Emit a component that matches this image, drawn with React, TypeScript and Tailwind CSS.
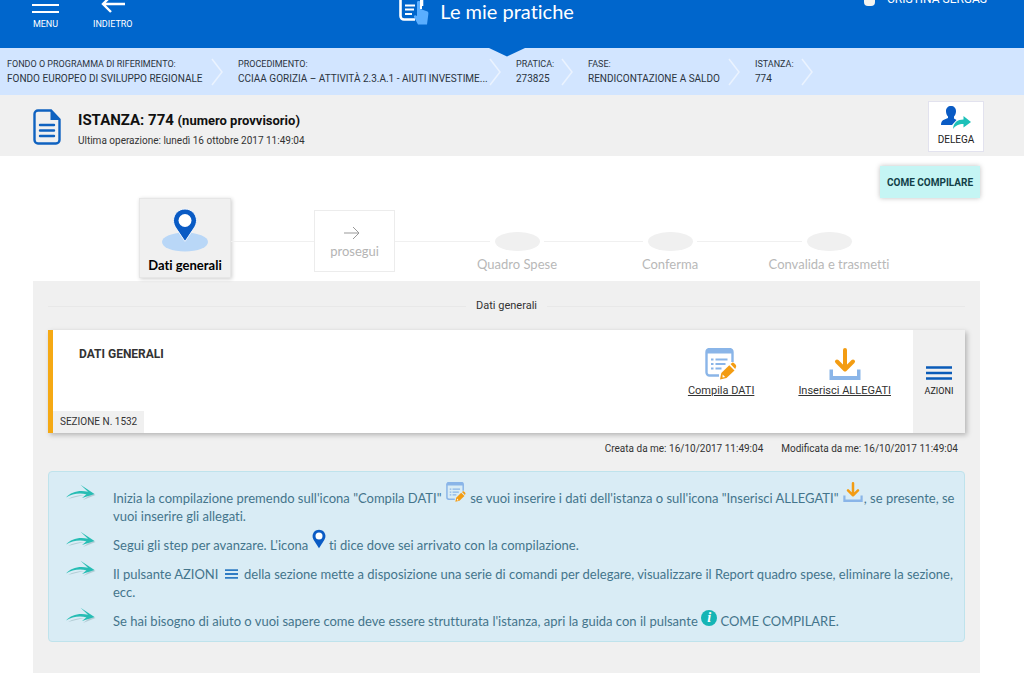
// components/Istanza/IstanzaPage.tsx
import React from 'react';

interface Crumb {
  label: string;
  value: string;
}

interface IconProps {
  className?: string;
}

const crumbs: Crumb[] = [
  { label: 'FONDO O PROGRAMMA DI RIFERIMENTO:', value: 'FONDO EUROPEO DI SVILUPPO REGIONALE' },
  { label: 'PROCEDIMENTO:', value: 'CCIAA GORIZIA – ATTIVITÀ 2.3.A.1 - AIUTI INVESTIME...' },
  { label: 'PRATICA:', value: '273825' },
  { label: 'FASE:', value: 'RENDICONTAZIONE A SALDO' },
  { label: 'ISTANZA:', value: '774' },
];

const BarsIcon: React.FC<IconProps> = ({ className }) => (
  <svg viewBox="0 0 26 14" className={className} preserveAspectRatio="none" fill="none" stroke="currentColor" strokeWidth="2.6">
    <path d="M0 1.500h26M0 7h26M0 12.500h26" />
  </svg>
);

const PinIcon: React.FC<IconProps> = ({ className }) => (
  <svg viewBox="0 0 24 34" className={className}>
    <path
      d="M12 1C5.800 1 1 5.800 1 12c0 3 1.100 5.200 2.500 7.600L12 33l8.500-13.400C21.900 17.200 23 15 23 12 23 5.800 18.200 1 12 1z"
      fill="#0a5bc4"
    />
    <circle cx="12" cy="12" r="6" fill="#fff" />
  </svg>
);

const CompilaIcon: React.FC<IconProps> = ({ className }) => (
  <svg viewBox="0 0 32 32" className={className} fill="none">
    <path d="M14 27.500H4.500a3 3 0 0 1-3-3V4a3 3 0 0 1 3-3h20a3 3 0 0 1 3 3v10" stroke="#8ab5e8" strokeWidth="2.400" />
    <path d="M1 5.500V4a3.500 3.500 0 0 1 3.500-3.500h20A3.500 3.500 0 0 1 28 4v1.500z" fill="#8ab5e8" />
    <path d="M6 11.500h2.500M6 16h2.500M6 20.500h2.500M10.500 11.500h12M10.500 16h10M10.500 20.500h6" stroke="#8ab5e8" strokeWidth="2" />
    <path d="M15 31.500l1.300-6.500 8-7.800 5.200 5.200-8 7.700z" fill="#f39c12" />
    <path d="M25.500 16l1.800-1.300c1-.7 4.500 2.600 3.900 3.900l-1 2.300z" fill="#f39c12" />
    <path d="M17.600 26.400l2.600 2.600-2.700.6z" fill="#fff" />
  </svg>
);

const AllegatiIcon: React.FC<IconProps> = ({ className }) => (
  <svg viewBox="0 0 32 32" className={className} fill="none">
    <path d="M0.500 21.500h3.500V28h24v-6.500h3.500V32H.5z" fill="#8ab5e8" />
    <path d="M16 2v19M8 13.500l8 8 8-8" stroke="#f39c12" strokeWidth="4" strokeLinecap="round" strokeLinejoin="round" />
  </svg>
);

const CurvedArrow: React.FC = () => (
  <svg viewBox="0 0 30 18" className="-mt-[5px] h-[18px] w-[30px] shrink-0">
    <path d="M2 15C9 11 17 10.500 23 11.500L17 16l12.500-5L26 9z" fill="#b3ccd5" />
    <path d="M0 13.500C5 8 13 5.800 22 7.800L14.500.8 28.500 10l-12.500 4 4.500-3.800C13 8.500 6 9.800 0 13.500z" fill="#27bdb4" />
  </svg>
);

const Header: React.FC = () => (
  <header className="relative flex h-12 items-end bg-[#0066cc] text-white">
    <nav className="flex w-[39%] items-end gap-[34px] pb-[18px] pl-[32px]">
      <button type="button" className="flex flex-col items-center gap-[5px] text-[9px] leading-[11px]">
        <svg viewBox="0 0 27 18" className="h-[18px] w-[27px]" stroke="currentColor" strokeWidth="2.200">
          <path d="M0 2h27M0 9h27M0 16h27" />
        </svg>
        MENU
      </button>
      <button type="button" className="flex flex-col items-center gap-[5px] text-[9px] leading-[11px]">
        <svg viewBox="0 0 24 18" className="h-[18px] w-[24px]" fill="none" stroke="currentColor" strokeWidth="2.400">
          <path d="M24 8H2M10 0L2 8l8 8" />
        </svg>
        INDIETRO
      </button>
    </nav>
    <div className="flex items-end gap-[11px] pb-[23px]">
      <svg viewBox="0 0 30 32" className="h-8 w-[30px]" fill="none">
        <path d="M16 26.500H5a3.500 3.500 0 0 1-3.500-3.500V4A3 3 0 0 1 4.500 1H20a3 3 0 0 1 3 3v9" stroke="#fff" strokeWidth="2.600" />
        <path d="M6 12.500h10M6 16.500h9M6 21h7" stroke="#fff" strokeWidth="2" />
        <path d="M18 9c0-1.500 3.500-1.500 3.500 0v7l7 2.500c1 .5 1 1.500.8 3L28 31.500h-9l-4-7.500c-.5-1.500 1-2.500 3-1z" fill="#5aaeff" />
        <path d="M22 6v10" stroke="#fff" strokeWidth="2" />
      </svg>
      <h1 className="font-[Lato,sans-serif] text-[20px] leading-[28px] [font-variant-ligatures:none]">Le mie pratiche</h1>
    </div>
    <div className="ml-auto flex items-end gap-3 pr-[37px] pb-[42px] text-[12px] leading-[14px]">
      <span className="h-3 w-[11px] rounded-sm bg-[#f4f4f0]" />
      CRISTINA SERGAS
    </div>
    <svg viewBox="0 0 36 9" className="absolute top-full left-[489px] z-10 h-[9px] w-9">
      <path d="M0 0h36L18 8.500z" fill="#0066cc" />
    </svg>
  </header>
);

const Breadcrumb: React.FC = () => (
  <ol className="grid h-[47px] grid-cols-[231px_278px_72px_167px_73px] bg-[#d2e5ff] pl-[7px] text-[#2b3440]">
    {crumbs.map(crumb => (
      <li key={crumb.label} className="flex items-center justify-between pr-[15px] whitespace-nowrap">
        <span className="flex w-0 flex-col">
          <span className="text-[9px] leading-[14px]">{crumb.label}</span>
          <span className="text-[10px] leading-[15px]">{crumb.value}</span>
        </span>
        <svg viewBox="0 0 12 28" className="h-7 w-3 shrink-0" fill="none" stroke="#ebf3ff" strokeWidth="1.500">
          <path d="M1 1l10 13L1 27" />
        </svg>
      </li>
    ))}
  </ol>
);

const IstanzaBar: React.FC = () => (
  <section className="flex h-[61px] items-center bg-[#f0f0f0] pt-[2px] pr-10 pl-[33px]">
    <svg viewBox="0 0 28 36" className="h-9 w-7" fill="none" stroke="#0f62c0" strokeWidth="2.400">
      <path d="M18 1.500H5A3.500 3.500 0 0 0 1.500 5v26A3.500 3.500 0 0 0 5 34.500h18a3.500 3.500 0 0 0 3.500-3.500V10.500z" />
      <path d="M17.500 1v10H27z" fill="#0f62c0" stroke="none" />
      <path d="M7 16h14M7 21.500h14M7 27h14" strokeLinecap="round" />
    </svg>
    <div className="ml-[17px] pt-2 text-[#111]">
      <h2 className="text-[15px] leading-5 font-bold">
        ISTANZA: 774 <span className="text-[13px]">(numero provvisorio)</span>
      </h2>
      <p className="text-[10px] leading-5 text-[#333]">Ultima operazione: lunedì 16 ottobre 2017 11:49:04</p>
    </div>
    <button
      type="button"
      className="ml-auto flex h-[51px] w-14 flex-col items-center gap-[3px] border border-[#e2e2ee] bg-white pt-[3px] text-[10px] leading-[14px] text-[#222]"
    >
      <svg viewBox="0 0 30 25" className="h-[25px] w-[30px]">
        <path
          d="M10 1c3 0 5 2 5 5.200 0 2.300-.8 4-2 5.300v2l2.500 1.500-4.500 5H0c0-3 1-4.500 3.500-5.500L7 13v-1.500C5.800 10.200 5 8.500 5 6.200 5 3 7 1 10 1z"
          fill="#0a5bc4"
        />
        <path d="M12 24c.5-6.500 4.500-9.500 10.500-9.500V11l7.500 6-7.500 5.500V19c-5 0-8 1.500-10.500 5z" fill="#1cc0b8" />
      </svg>
      DELEGA
    </button>
  </section>
);

const Step: React.FC<{ label: string }> = ({ label }) => (
  <li className="mt-[34px] flex w-[54px] flex-col items-center gap-1 whitespace-nowrap">
    <span className="h-[19px] w-[45px] rounded-[50%] bg-[#f0f0f0]" />
    <span className="text-[13px] leading-[18px] text-[#b8b8b8]">{label}</span>
  </li>
);

const Stepper: React.FC = () => (
  <ol className="mr-[168px] ml-[139px] flex h-[83px] items-start font-[Lato,sans-serif] [font-variant-ligatures:none]">
    <li className="flex h-20 w-[92px] flex-col items-center border border-[#e6e6e6] bg-[#f0f0f0] pt-[9px] shadow-[1px_1px_4px_rgba(0,0,0,0.2)]">
      <svg viewBox="0 0 46 44" className="h-11 w-[46px]">
        <ellipse cx="23" cy="34" rx="23" ry="9.500" fill="#b9d7f7" />
        <path
          d="M23 1C16.500 1 11.500 6 11.500 12.500c0 3 1 5.200 2.500 7.600L23 33.500l9-13.400c1.500-2.400 2.500-4.600 2.500-7.600C34.500 6 29.500 1 23 1z"
          fill="#0a5bc4"
          stroke="#f3f8ff"
          strokeWidth="1"
        />
        <circle cx="23" cy="12.500" r="6.500" fill="#fff" />
      </svg>
      <span className="mt-1 text-[13px] leading-[18px] font-bold whitespace-nowrap text-black">Dati generali</span>
    </li>
    <li aria-hidden="true" className="mt-[43px] h-px grow-[83] bg-[#f0f0f0]" />
    <li className="mt-3">
      <button
        type="button"
        className="flex h-[62px] w-[81px] flex-col items-center border border-[#ececec] bg-white pt-[15px] text-[13px] leading-[18px] text-[#b4b4b4]"
      >
        <svg viewBox="0 0 16 14" className="mr-1.5 mb-0.5 h-3.5 w-4" fill="none" stroke="#999">
          <path d="M0 7h15M9 1l6 6-6 6" />
        </svg>
        prosegui
      </button>
    </li>
    <li aria-hidden="true" className="mt-[43px] h-px grow-[95] bg-[#f0f0f0]" />
    <Step label="Quadro Spese" />
    <li aria-hidden="true" className="mt-[43px] h-px grow-[99] bg-[#f0f0f0]" />
    <Step label="Conferma" />
    <li aria-hidden="true" className="mt-[43px] h-px grow-[105] bg-[#f0f0f0]" />
    <Step label="Convalida e trasmetti" />
  </ol>
);

const SezioneCard: React.FC = () => (
  <article className="flex h-[103px] border-l-[5px] border-[#f5a914] bg-white shadow-[2px_2px_5px_rgba(0,0,0,0.25)]">
    <div className="flex flex-col items-start justify-between">
      <h3 className="mt-[15px] ml-[26px] text-[12px] leading-[18px] font-bold text-[#333]">DATI GENERALI</h3>
      <span className="bg-[#f0f0f0] px-[7px] text-[10px] leading-[22px] text-[#333]">SEZIONE N. 1532</span>
    </div>
    <div className="mr-[22px] ml-auto flex items-start gap-[44px] pt-[18px] text-[11px] leading-4 text-[#333]">
      <a href="#compila" className="flex flex-col items-center gap-[3px] underline">
        <CompilaIcon className="h-8 w-8" />
        Compila DATI
      </a>
      <a href="#allegati" className="flex flex-col items-center gap-[3px] underline">
        <AllegatiIcon className="h-8 w-8" />
        Inserisci ALLEGATI
      </a>
    </div>
    <button
      type="button"
      className="flex w-[52px] flex-col items-center justify-center gap-[5px] bg-[#f0f0f0] text-[9px] leading-3 text-[#222]"
    >
      <BarsIcon className="h-3.5 w-[26px] text-[#0a5bb8]" />
      AZIONI
    </button>
  </article>
);

const HelpItem: React.FC<{ children: React.ReactNode }> = ({ children }) => (
  <li className="flex items-start gap-[17px]">
    <CurvedArrow />
    <p className="min-w-0">{children}</p>
  </li>
);

const HelpBox: React.FC = () => (
  <ul className="mt-[14px] flex flex-col gap-[11px] rounded-sm border border-[#bfe3ec] bg-[#d9ecf5] pt-[17px] pb-[11px] pl-[17px] font-[Lato,sans-serif] text-[13px] leading-[18px] text-[#44758c] [font-variant-ligatures:none]">
    <HelpItem>
      Inizia la compilazione premendo sull'icona "Compila DATI"{' '}
      <CompilaIcon className="mx-px -mt-2 inline-block h-5 w-5 align-[1px]" /> se vuoi inserire i dati dell'istanza o
      sull'icona "Inserisci ALLEGATI" <AllegatiIcon className="mx-px -mt-2 inline-block h-5 w-5 align-[1px]" />, se
      presente, se vuoi inserire gli allegati.
    </HelpItem>
    <HelpItem>
      Segui gli step per avanzare. L'icona <PinIcon className="-mt-2 inline-block h-5 w-3.5 align-[1px]" /> ti dice dove
      sei arrivato con la compilazione.
    </HelpItem>
    <HelpItem>
      Il pulsante AZIONI <BarsIcon className="mx-[3px] inline-block h-[10px] w-[13px] align-[0px] text-[#2f7cc4]" /> della
      sezione mette a disposizione una serie di comandi per delegare, visualizzare il Report quadro spese, eliminare la
      sezione,
      <br />
      ecc.
    </HelpItem>
    <HelpItem>
      Se hai bisogno di aiuto o vuoi sapere come deve essere strutturata l'istanza, apri la guida con il pulsante{' '}
      <span className="-mt-2 inline-block h-4 w-4 rounded-full bg-[#15b5b5] text-center align-[4px] font-['Liberation_Serif',serif] text-[14px] leading-4 font-bold text-white italic">
        i
      </span>{' '}
      COME COMPILARE.
    </HelpItem>
  </ul>
);

export default function App() {
  return (
    <div className="min-h-screen bg-white font-[Roboto,sans-serif]">
      <Header />
      <Breadcrumb />
      <IstanzaBar />

      <div className="flex justify-end pt-[10px] pr-11">
        <button
          type="button"
          className="h-8 w-[100px] bg-[#c5f5f4] text-[10px] font-bold whitespace-nowrap text-[#123f48] shadow-[0_0_5px_rgba(0,0,0,0.25)]"
        >
          COME COMPILARE
        </button>
      </div>
      <Stepper />

      {/* Sezione corrente */}
      <main className="mr-11 ml-[33px] bg-[#f0f0f0] px-[15px] pt-4 pb-[31px]">
        <div className="flex items-center gap-[10px]">
          <span className="h-px flex-1 bg-[#e8e8e8]" />
          <h2 className="text-[11px] leading-[18px] text-[#333]">Dati generali</h2>
          <span className="h-px flex-1 bg-[#e8e8e8]" />
        </div>
        <div className="mt-[15px]">
          <SezioneCard />
        </div>
        <div className="mt-2 flex justify-end gap-[18px] pr-[7px] text-[10px] leading-4 text-[#333]">
          <span>Creata da me: 16/10/2017 11:49:04</span>
          <span>Modificata da me: 16/10/2017 11:49:04</span>
        </div>
        <HelpBox />
      </main>
    </div>
  );
}
